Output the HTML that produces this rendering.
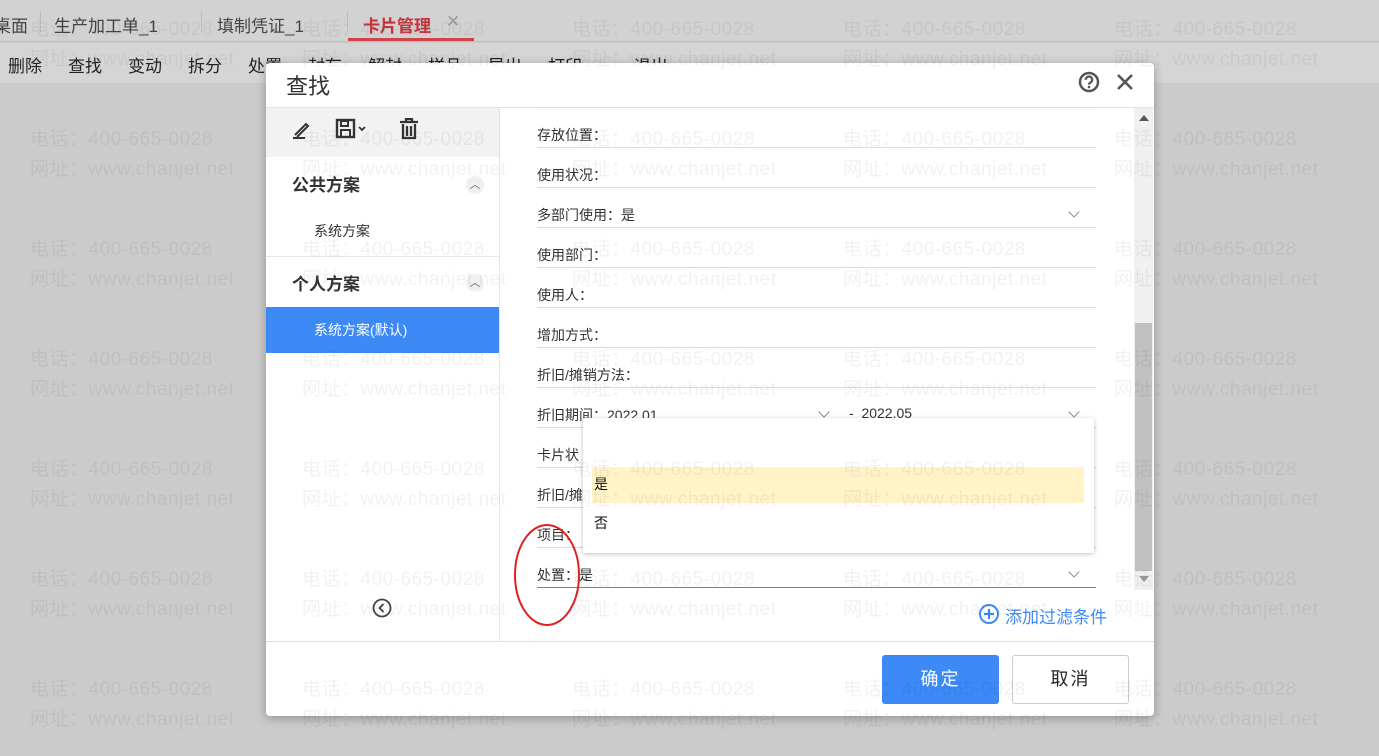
<!DOCTYPE html>
<html><head><meta charset="utf-8"><style>
*{margin:0;padding:0;box-sizing:border-box}
body{width:1379px;height:756px;overflow:hidden;position:relative;background:#cbcbcb;font-family:"Liberation Sans","Noto Sans CJK SC",sans-serif;color:#333}
.abs{position:absolute}
.tabs{left:0;top:0;width:1379px;height:42px;background:#d2d2d2;border-bottom:1px solid #bdbdbd;font-size:17px;color:#444}
.tabs span{position:absolute;top:12px}
.tb{left:0;top:43px;width:1379px;height:40px;background:#d5d5d5;font-size:17px;color:#222}
.tb span{position:absolute;top:9px}
.modal{left:266px;top:63px;width:888px;height:653px;background:#fff;border-radius:4px;box-shadow:0 2px 10px rgba(0,0,0,.3)}
.row{position:absolute;left:271px;width:559px;height:40px;border-bottom:1px solid #dcdcdc;font-size:14px;color:#333}
.row span{position:absolute;top:17px}
.chev{position:absolute;width:8px;height:8px;border-right:1.5px solid #888;border-bottom:1.5px solid #888;transform:rotate(45deg)}
.wm{position:absolute;font-size:19px;color:rgba(0,0,0,.055);line-height:30px;white-space:nowrap;z-index:50;pointer-events:none;letter-spacing:.5px}
</style></head><body>
<div class="abs tabs">
<span style="left:-6px">桌面</span><span style="left:54px">生产加工单_1</span><span style="left:217px">填制凭证_1</span>
<span style="left:363px;color:#c8323a;font-weight:bold">卡片管理</span><span style="left:446px;color:#999">✕</span>
<div class="abs" style="left:348px;top:38px;width:126px;height:3px;background:#d0434b"></div>
<div class="abs" style="left:40px;top:12px;width:1px;height:20px;background:#bbb"></div>
<div class="abs" style="left:201px;top:12px;width:1px;height:20px;background:#bbb"></div>
<div class="abs" style="left:347px;top:12px;width:1px;height:20px;background:#bbb"></div>
</div>
<div class="abs tb">
<span style="left:8px">删除</span><span style="left:68px">查找</span><span style="left:128px">变动</span><span style="left:188px">拆分</span><span style="left:248px">处置</span><span style="left:308px">封存</span><span style="left:368px">解封</span><span style="left:428px">样品</span><span style="left:488px">导出</span><span style="left:548px">打印▾</span><span style="left:634px">退出</span>
</div>
<div class="abs modal">
<div class="abs" style="left:20px;top:6px;font-size:22px;color:#333">查找</div>
<svg class="abs" style="left:812px;top:8px" width="22" height="22" viewBox="0 0 22 22"><circle cx="11" cy="11" r="9" fill="none" stroke="#555" stroke-width="2.5"/><path d="M7.8 8.8a3.2 3.2 0 1 1 4.6 2.8c-1 .5-1.4 1-1.4 2" fill="none" stroke="#555" stroke-width="2.3"/><circle cx="11" cy="16" r="1.3" fill="#555"/></svg>
<svg class="abs" style="left:850px;top:10px" width="18" height="18" viewBox="0 0 18 18"><path d="M2 2L16 16M16 2L2 16" stroke="#555" stroke-width="2.6"/></svg>
<div class="abs" style="left:0;top:44px;width:888px;height:1px;background:#e2e2e2"></div>
<div class="abs" style="left:0;top:45px;width:233px;height:49px;background:#f2f2f2"></div>
<div class="abs" style="left:233px;top:45px;width:1px;height:533px;background:#e5e5e5"></div>
<svg class="abs" style="left:26px;top:56px" width="20" height="20" viewBox="0 0 20 20"><path d="M3 16L14 5l2 2L5 18M1 19h12" fill="none" stroke="#333" stroke-width="2"/></svg>
<svg class="abs" style="left:69px;top:55px" width="36" height="22" viewBox="0 0 36 22"><rect x="2" y="2" width="17" height="17" fill="none" stroke="#333" stroke-width="2.4"/><rect x="6" y="3" width="7" height="5" fill="none" stroke="#333" stroke-width="2"/><rect x="6" y="12" width="9" height="7" fill="none" stroke="#333" stroke-width="2"/><path d="M24 9l3 3 3-3" fill="none" stroke="#333" stroke-width="1.8"/></svg>
<svg class="abs" style="left:133px;top:55px" width="20" height="22" viewBox="0 0 20 22"><path d="M1 4h18M7 4V1h6v3M4 6v14h12V6M8 8v10M12 8v10" fill="none" stroke="#333" stroke-width="2.3"/></svg>
<div class="abs" style="left:26px;top:108px;font-size:17px;font-weight:bold">公共方案</div>
<div class="abs" style="left:200px;top:113px;width:18px;height:18px;border-radius:9px;background:#f0f0f0;color:#666;font-size:11px;text-align:center;line-height:18px">︿</div>
<div class="abs" style="left:48px;top:158px;font-size:14px">系统方案</div>
<div class="abs" style="left:0;top:193px;width:233px;height:1px;background:#e8e8e8"></div>
<div class="abs" style="left:26px;top:207px;font-size:17px;font-weight:bold">个人方案</div>
<div class="abs" style="left:200px;top:211px;width:18px;height:18px;border-radius:9px;background:#f0f0f0;color:#666;font-size:11px;text-align:center;line-height:18px">︿</div>
<div class="abs" style="left:0;top:244px;width:233px;height:46px;background:#3d8af7;color:#fff;font-size:14px;padding:13px 0 0 48px">系统方案(默认)</div>
<svg class="abs" style="left:106px;top:535px" width="20" height="20" viewBox="0 0 20 20"><circle cx="10" cy="10" r="8.5" fill="none" stroke="#444" stroke-width="1.8"/><path d="M11.5 6l-4 4 4 4" fill="none" stroke="#444" stroke-width="1.8"/></svg>
<div class="abs" style="left:271px;top:44px;width:559px;height:1px;background:#ddd"></div>
<div class="row" style="top:45px"><span>存放位置：</span></div>
<div class="row" style="top:85px"><span>使用状况：</span></div>
<div class="row" style="top:125px"><span>多部门使用：是</span><i class="chev" style="left:533px;top:20px"></i></div>
<div class="row" style="top:165px"><span>使用部门：</span></div>
<div class="row" style="top:205px"><span>使用人：</span></div>
<div class="row" style="top:245px"><span>增加方式：</span></div>
<div class="row" style="top:285px"><span>折旧/摊销方法：</span></div>
<div class="row" style="top:325px"><span>折旧期间：2022.01</span><i class="chev" style="left:283px;top:20px"></i><span style="left:312px">- &nbsp;2022.05</span><i class="chev" style="left:533px;top:20px"></i></div>
<div class="row" style="top:365px"><span>卡片状</span></div>
<div class="row" style="top:405px"><span>折旧/摊</span></div>
<div class="row" style="top:445px"><span>项目：</span></div>
<div class="row" style="top:485px;border-bottom:1px solid #3d8af7"><span>处置：是</span><i class="chev" style="left:533px;top:20px"></i></div>
<div class="abs" style="left:868px;top:45px;width:19px;height:482px;background:#f0f0f0"></div>
<div class="abs" style="left:869px;top:260px;width:17px;height:248px;background:#c1c1c1"></div>
<div class="abs" style="left:873px;top:52px;width:0;height:0;border-left:5px solid transparent;border-right:5px solid transparent;border-bottom:6px solid #555"></div>
<div class="abs" style="left:873px;top:513px;width:0;height:0;border-left:5px solid transparent;border-right:5px solid transparent;border-top:6px solid #999"></div>
<div class="abs" style="left:317px;top:355px;width:511px;height:135px;background:#fff;box-shadow:0 1px 5px rgba(0,0,0,.25);border-radius:2px">
<div class="abs" style="left:9px;top:49px;width:492px;height:36px;background:#fff3c7"></div>
<div class="abs" style="left:11px;top:56px;font-size:14px;color:#111">是</div>
<div class="abs" style="left:11px;top:95px;font-size:14px;color:#111">否</div>
</div>
<svg class="abs" style="left:712px;top:540px" width="22" height="22" viewBox="0 0 22 22"><circle cx="11" cy="11" r="9" fill="none" stroke="#3d8af7" stroke-width="2"/><path d="M11 6v10M6 11h10" stroke="#3d8af7" stroke-width="2.2"/></svg>
<div class="abs" style="left:739px;top:540px;font-size:17px;color:#3d8af7">添加过滤条件</div>
<div class="abs" style="left:0;top:578px;width:888px;height:1px;background:#ddd"></div>
<div class="abs" style="left:616px;top:592px;width:117px;height:49px;background:#3d8af7;border-radius:3px;color:#fff;font-size:18px;text-align:center;line-height:49px;letter-spacing:2px">确定</div>
<div class="abs" style="left:746px;top:592px;width:117px;height:49px;border:1px solid #ccc;border-radius:3px;color:#222;font-size:18px;text-align:center;line-height:47px;letter-spacing:2px">取消</div>
</div>
<svg class="abs" style="left:512px;top:522px;z-index:60" width="72" height="106"><ellipse cx="35" cy="53" rx="32" ry="50" fill="none" stroke="#e02020" stroke-width="2"/></svg>
<div id="w"></div>
<script>
var h='';var xs=[30,302,572,843,1114],ys=[15,125,235,345,455,565,675];
ys.forEach(function(y){xs.forEach(function(x){h+='<div class="wm" style="left:'+x+'px;top:'+y+'px">电话：400-665-0028<br>网址：www.chanjet.net</div>';});});
document.getElementById('w').innerHTML=h;
</script>
</body></html>
